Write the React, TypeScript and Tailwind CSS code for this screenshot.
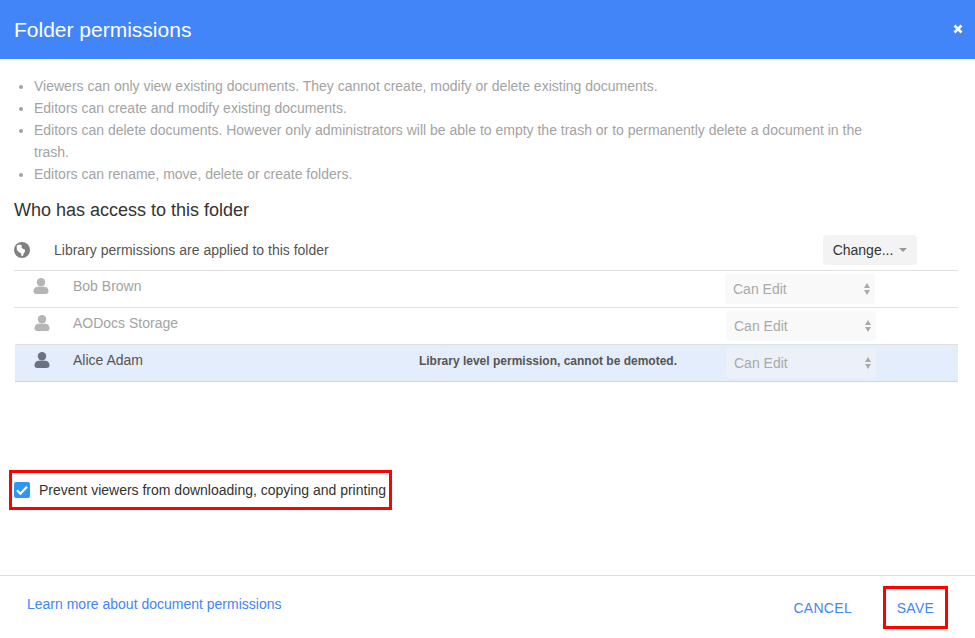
function PersonIcon({ className }: { className: string }) {
  return (
    <svg viewBox="0 0 16 16" className={className} fill="currentColor">
      <circle cx="8" cy="4.300" r="4.200" />
      <path d="M.5 13.500c0-3.300 2.400-4.700 4.600-4.700h5.800c2.200 0 4.600 1.400 4.600 4.700 0 1.700-1.400 2.500-2.800 2.500H3.300C1.900 16 .5 15.200.5 13.500z" />
    </svg>
  );
}

function GlobeIcon() {
  return (
    <svg viewBox="0 0 16 16" className="w-4 h-4">
      <circle cx="8" cy="8" r="8" fill="#808080" />
      <path d="M2.800 3.600 6 2.600l2 1.200-.6 1.600 1.400 1.400 2 .8.200 1.800-1.200 1.800-.8 2.600-1.400.4-.6-3-2.200-1.200-2-2.200z" fill="#fff" />
    </svg>
  );
}

function RoleSelect({ className }: { className: string }) {
  return (
    <div className={"w-[150px] h-[30px] rounded-[4px] flex items-center justify-between pl-2 pr-[5px] text-[14px] text-[#a9a9a9] " + className}>
      <span>Can Edit</span>
      <span className="flex flex-col gap-[2px]">
        <span className="w-0 h-0 border-x-[3.500px] border-x-transparent border-b-[5px] border-b-[#aaa]" />
        <span className="w-0 h-0 border-x-[3.500px] border-x-transparent border-t-[5px] border-t-[#aaa]" />
      </span>
    </div>
  );
}

const notes = [
  "Viewers can only view existing documents. They cannot create, modify or delete existing documents.",
  "Editors can create and modify existing documents.",
  "Editors can delete documents. However only administrators will be able to empty the trash or to permanently delete a document in the trash.",
  "Editors can rename, move, delete or create folders.",
];

export default function App() {
  return (
    <div className="w-[975px] h-[638px] bg-white flex flex-col overflow-hidden font-['Liberation_Sans',Arial,sans-serif]">
      {/* Header */}
      <header className="h-[59px] shrink-0 bg-[#4285f9] flex items-center justify-between pl-[14px] pr-[12px] text-white">
        <h1 className="text-[21px]">Folder permissions</h1>
        <svg viewBox="0 0 10 10" className="w-[10px] h-[10px] mb-[2px]">
          <path d="M1.500 1.500l7 7M8.500 1.500l-7 7" stroke="white" strokeWidth="2.600" />
        </svg>
      </header>

      {/* Notes */}
      <ul className="list-disc pl-[34px] pr-[110px] pt-[16px] text-[14px] leading-[22px] text-[#a3a3a3] marker:text-[#a3a3a3]">
        {notes.map((n) => (
          <li key={n}>{n}</li>
        ))}
      </ul>

      {/* Access list */}
      <section className="px-[14px] mt-[14px]">
        <h2 className="text-[18px] leading-[22px] text-[#333]">Who has access to this folder</h2>
        <div className="flex items-center h-[40px] pt-[9px] border-b border-[#e0e0e0] mr-[3px] box-content">
          <GlobeIcon />
          <span className="ml-[24px] text-[14px] text-[#555]">Library permissions are applied to this folder</span>
          <button className="ml-auto mr-[41px] w-[94px] h-[30px] bg-[#f3f3f3] rounded-[4px] text-[14px] text-[#333] flex items-center justify-center gap-[6px]">
            Change...
            <span className="w-0 h-0 border-x-[4px] border-x-transparent border-t-[4px] border-t-[#999]" />
          </button>
        </div>
        <div className="flex items-center h-[36px] border-b border-[#e0e0e0] box-content mr-[3px]">
          <PersonIcon className="w-[16px] h-[16px] ml-[19px] mb-[6px] text-[#b5b5b5]" />
          <span className="ml-[24px] mb-[6px] text-[14px] text-[#a3a3a3]">Bob Brown</span>
          <RoleSelect className="ml-auto mr-[83px] bg-[#f9f9f9]" />
        </div>
        <div className="flex items-center h-[36px] border-b border-[#e0e0e0] box-content ml-[1px] mr-[3px]">
          <PersonIcon className="w-[16px] h-[16px] ml-[19px] mb-[6px] text-[#b5b5b5]" />
          <span className="ml-[23px] mb-[6px] text-[14px] text-[#a3a3a3]">AODocs Storage</span>
          <RoleSelect className="ml-auto mr-[82px] bg-[#f9f9f9]" />
        </div>
        <div className="flex items-center h-[36px] border-b border-[#c9d6ea] box-content ml-[1px] mr-[3px] bg-[#e3edfc]">
          <PersonIcon className="w-[16px] h-[16px] ml-[19px] mb-[6px] text-[#6c7380]" />
          <span className="ml-[23px] mb-[6px] text-[14px] text-[#555]">Alice Adam</span>
          <span className="ml-auto mr-[49px] mb-[4px] text-[12px] font-bold text-[#555]">Library level permission, cannot be demoted.</span>
          <RoleSelect className="mr-[82px] bg-[#ebf0f9]" />
        </div>
      </section>

      {/* Download restriction */}
      <div className="mt-[88px] ml-[9px] w-[383px] h-[40px] border-[3px] border-[#f00] flex items-center pl-[2px]">
        <span className="w-4 h-4 rounded-[2px] bg-[#2e96f3] flex items-center justify-center">
          <svg viewBox="0 0 16 16" className="w-4 h-4">
            <path d="M3 8.300l3.400 3.400L13 4.800" fill="none" stroke="white" strokeWidth="2.200" />
          </svg>
        </span>
        <span className="ml-[9px] text-[14px] text-[#333] whitespace-nowrap">Prevent viewers from downloading, copying and printing</span>
      </div>

      {/* Footer */}
      <footer className="mt-[65px] flex-1 border-t border-[#ddd] flex items-start pl-[27px] pr-[27px]">
        <a className="mt-[19px] text-[14px] leading-[18px] text-[#4285f9]">Learn more about document permissions</a>
        <button className="ml-auto mt-[23px] text-[14px] leading-[18px] tracking-[0.3px] text-[#4285f9]">CANCEL</button>
        <button className="ml-[31px] mt-[10px] w-[65px] h-[43px] pt-[1px] border-[3px] border-[#f00] text-[14px] tracking-[0.3px] text-[#4285f9]">SAVE</button>
      </footer>
    </div>
  );
}
